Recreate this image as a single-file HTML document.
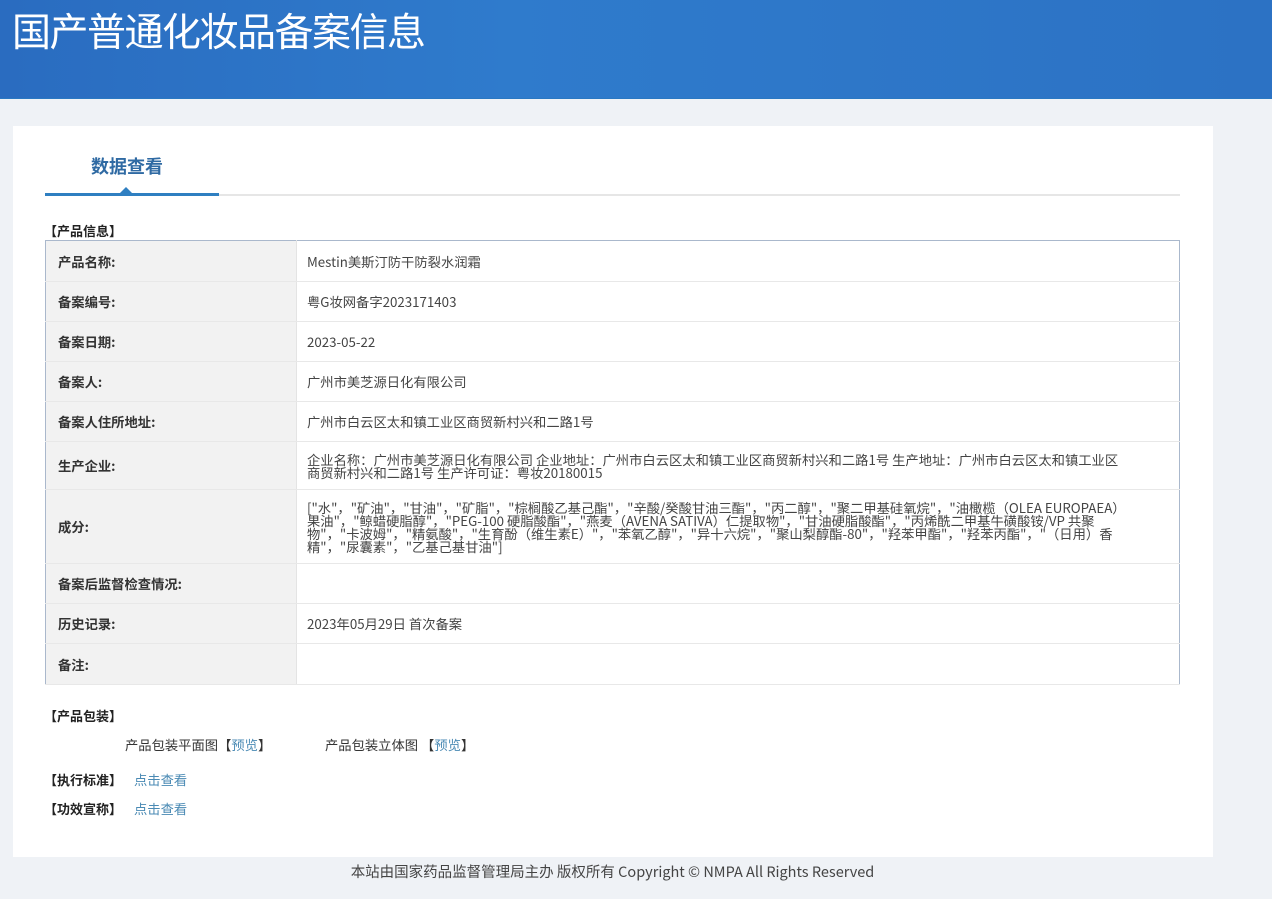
<!DOCTYPE html>
<html><head><meta charset="utf-8"><style>
*{margin:0;padding:0;box-sizing:border-box}
body{width:1272px;height:899px;overflow:hidden;background:#eff2f6;font-family:"Liberation Sans","Noto Sans CJK SC",sans-serif;color:#333;position:relative}
.hd{position:absolute;left:0;top:0;width:1272px;height:99px;background:linear-gradient(90deg,#2a6cc0 0%,#2f7bcc 40%,#2c72c4 100%);border-bottom:1px solid #2a78c2}
.hd h1{position:absolute;left:12px;top:2px;font-size:39px;font-weight:normal;color:#fff;font-family:"Noto Sans CJK SC",sans-serif;letter-spacing:-1.5px}
.card{position:absolute;left:13px;top:126px;width:1200px;height:731px;background:#fff}
.tab{position:absolute;left:91px;top:153px;font-size:18px;font-weight:bold;color:#2f6aa3;font-family:"Noto Sans CJK SC",sans-serif}
.line{position:absolute;left:45px;top:194px;width:1135px;height:2px;background:#e6e6e6}
.line2{position:absolute;left:45px;top:193px;width:174px;height:3px;background:#2f7fc1}
.tri{position:absolute;left:119px;top:187px;width:0;height:0;border-left:7px solid transparent;border-right:7px solid transparent;border-bottom:7px solid #2f7fc1}
.sec{position:absolute;left:44px;font-size:13px;font-weight:bold;color:#222;font-family:"Noto Sans CJK SC",sans-serif}
table{position:absolute;left:45px;top:240px;width:1135px;border-collapse:collapse;border:1px solid #aab8cc;font-size:13.3px;font-family:"Noto Sans CJK SC",sans-serif}
td{border-bottom:1px solid #e8e8e8;vertical-align:middle}
td.l{width:251px;background:#f2f2f2;font-weight:bold;padding-left:12px;color:#333;border-right:1px solid #e4e4e4}
td.v{padding:0 10px;color:#444;line-height:13px}
a{color:#4a8ab4;text-decoration:none}
.txt{position:absolute;font-size:13.3px;color:#333;font-family:"Noto Sans CJK SC",sans-serif}
.ft{position:absolute;left:0;width:1225px;text-align:center;top:861px;font-size:14.5px;color:#444;font-family:"Noto Sans CJK SC",sans-serif}
</style></head><body>
<div class="hd"><h1>国产普通化妆品备案信息</h1></div>
<div class="card"></div>
<div class="tab">数据查看</div>
<div class="line"></div><div class="line2"></div><div class="tri"></div>
<div class="sec" style="top:221px">【产品信息】</div>
<table>
<tr style="height:41px"><td class="l">产品名称:</td><td class="v">Mestin美斯汀防干防裂水润霜</td></tr>
<tr style="height:40px"><td class="l">备案编号:</td><td class="v">粤G妆网备字2023171403</td></tr>
<tr style="height:40px"><td class="l">备案日期:</td><td class="v">2023-05-22</td></tr>
<tr style="height:40px"><td class="l">备案人:</td><td class="v">广州市美芝源日化有限公司</td></tr>
<tr style="height:40px"><td class="l">备案人住所地址:</td><td class="v">广州市白云区太和镇工业区商贸新村兴和二路1号</td></tr>
<tr style="height:48px"><td class="l">生产企业:</td><td class="v">企业名称：广州市美芝源日化有限公司 企业地址：广州市白云区太和镇工业区商贸新村兴和二路1号 生产地址：广州市白云区太和镇工业区<br>商贸新村兴和二路1号 生产许可证：粤妆20180015</td></tr>
<tr style="height:74px"><td class="l">成分:</td><td class="v">["水"，"矿油"，"甘油"，"矿脂"，"棕榈酸乙基己酯"，"辛酸/癸酸甘油三酯"，"丙二醇"，"聚二甲基硅氧烷"，"油橄榄（OLEA EUROPAEA）<br>果油"，"鲸蜡硬脂醇"，"PEG-100 硬脂酸酯"，"燕麦（AVENA SATIVA）仁提取物"，"甘油硬脂酸酯"，"丙烯酰二甲基牛磺酸铵/VP 共聚<br>物"，"卡波姆"，"精氨酸"，"生育酚（维生素E）"，"苯氧乙醇"，"异十六烷"，"聚山梨醇酯-80"，"羟苯甲酯"，"羟苯丙酯"，"（日用）香<br>精"，"尿囊素"，"乙基己基甘油"]</td></tr>
<tr style="height:40px"><td class="l">备案后监督检查情况:</td><td class="v"></td></tr>
<tr style="height:40px"><td class="l">历史记录:</td><td class="v">2023年05月29日 首次备案</td></tr>
<tr style="height:41px"><td class="l">备注:</td><td class="v"></td></tr>
</table>
<div class="sec" style="top:706px">【产品包装】</div>
<div class="txt" style="left:125px;top:735px">产品包装平面图【<a>预览</a>】</div>
<div class="txt" style="left:325px;top:735px">产品包装立体图 【<a>预览</a>】</div>
<div class="sec" style="top:770px">【执行标准】</div><a class="txt" style="left:134px;top:770px;color:#4a8ab4">点击查看</a>
<div class="sec" style="top:799px">【功效宣称】</div><a class="txt" style="left:134px;top:799px;color:#4a8ab4">点击查看</a>
<div class="ft">本站由国家药品监督管理局主办 版权所有 Copyright © NMPA All Rights Reserved</div>
</body></html>
